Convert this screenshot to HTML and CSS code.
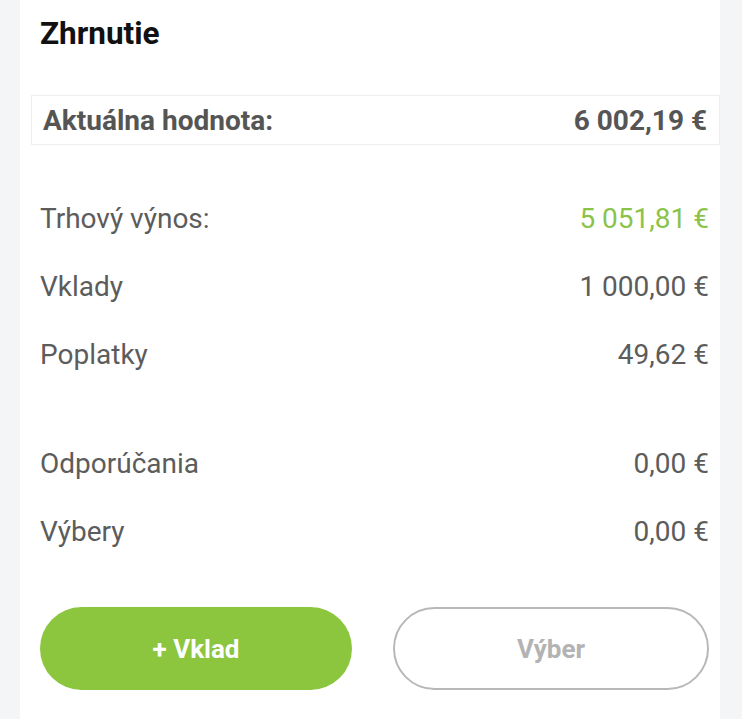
FILE: index.html
```html
<!DOCTYPE html>
<html>
<head>
    <title>Zhrnutie</title>
    <link rel="stylesheet" href="styles.css">
</head>
<body>
    <div class="card">
        <h2 class="title">Zhrnutie</h2>
        <div class="total-box">
            <span>Aktuálna hodnota:</span>
            <span>6 002,19 €</span>
        </div>
        <div class="rows">
            <div class="row">
                <span>Trhový výnos:</span>
                <span class="positive">5 051,81 €</span>
            </div>
            <div class="row">
                <span>Vklady</span>
                <span>1 000,00 €</span>
            </div>
            <div class="row">
                <span>Poplatky</span>
                <span>49,62 €</span>
            </div>
        </div>
        <div class="rows rows-second">
            <div class="row">
                <span>Odporúčania</span>
                <span>0,00 €</span>
            </div>
            <div class="row">
                <span>Výbery</span>
                <span>0,00 €</span>
            </div>
        </div>
        <div class="button-group">
            <button class="deposit-btn">+ Vklad</button>
            <button class="withdraw-btn">Výber</button>
        </div>
    </div>
</body>
</html>
```

FILE: styles.css
```css
body {
    margin: 0;
    background-color: #f4f5f7;
    font-family: Roboto, "Liberation Sans", sans-serif;
}
.card {
    background: white;
    margin: 0 22px 0 20px;
    padding: 14px 11px 40px 20px;
    min-height: 719px;
    box-sizing: border-box;
}
.title {
    margin: 0;
    font-size: 31.5px;
    line-height: 40px;
    font-weight: bold;
    color: #111;
}
.total-box {
    display: flex;
    justify-content: space-between;
    align-items: center;
    margin: 41px -11px 0 -9px;
    height: 50px;
    box-sizing: border-box;
    padding: 0 12px 0 11px;
    border: 1px solid #eeeeee;
    font-size: 28px;
    font-weight: bold;
    color: #555;
}
.rows {
    margin-top: 39px;
}
.rows-second {
    margin-top: 41px;
}
.row {
    display: flex;
    justify-content: space-between;
    align-items: center;
    height: 68px;
    font-size: 28px;
    color: #5c5c5c;
}
.positive {
    color: #8bc34a;
}
.button-group {
    display: flex;
    gap: 41px;
    margin-top: 42px;
}
button {
    flex: 1;
    height: 83px;
    border-radius: 42px;
    font-family: Roboto, "Liberation Sans", sans-serif;
    font-size: 26px;
    font-weight: bold;
    cursor: pointer;
}
.deposit-btn {
    background-color: #8cc63f;
    border: none;
    color: white;
}
.withdraw-btn {
    background: white;
    border: 2px solid #b8b8b8;
    color: #b3b3b3;
}
```
